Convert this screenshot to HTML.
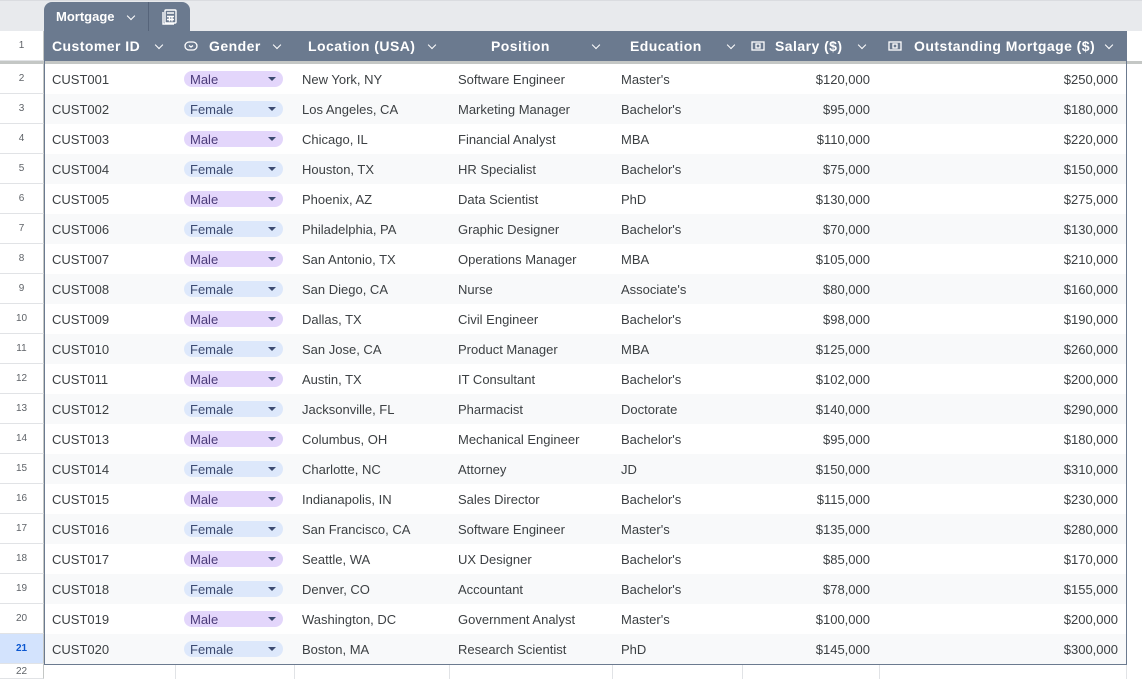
<!DOCTYPE html>
<html><head><meta charset="utf-8"><style>
*{margin:0;padding:0;box-sizing:border-box}
body{width:1142px;height:679px;overflow:hidden;background:#fff;font-family:"Liberation Sans",Arial,sans-serif;font-size:13px;color:#3c4043;position:relative}
.top{position:absolute;left:0;top:0;width:1142px;height:31px;background:#e8eaed;border-top:1px solid #dadce0}
.tab{position:absolute;left:44px;top:2px;width:146px;height:30px;background:#6b7a8f;border-radius:8px 8px 0 0;color:#fff}
.tab .t{position:absolute;left:12px;top:7px;font-weight:bold;font-size:13px}
.tab .sep{position:absolute;left:104px;top:0;width:1px;height:30px;background:#56647a}
.rn{position:absolute;left:0;width:44px;text-align:center;font-size:10px;color:#5f6368;border-bottom:1px solid #e1e3e6;border-right:1px solid #c4c7c5;background:#fff}
.hdr{position:absolute;left:44px;top:31px;width:1082px;height:30px;background:#6b7a8f;color:#fff;font-weight:bold;font-size:14px;letter-spacing:0.45px}
.hdr div{position:absolute;top:7px;white-space:nowrap}
.thick{position:absolute;left:0;top:61px;width:1142px;height:3px;background:#c4c7c5}
.row{position:absolute;left:44px;width:1082px;height:30px}
.row.alt{background:#f8f9fa}
.row div{position:absolute;top:8px;white-space:nowrap}
.chip{top:7px!important;left:140px;width:99px;height:16px;border-radius:8px;padding-left:6px;line-height:17px;font-size:13px}
.m{background:#e3d6fb;color:#4a3a78}.f{background:#dde8fb;color:#3c4a70}
.chip:after{content:"";position:absolute;right:7px;top:6px;border-left:4px solid transparent;border-right:4px solid transparent;border-top:4px solid #3c4a70}
.r{text-align:right}
.frame{position:absolute;left:44px;top:31px;width:1083px;height:634px;border:1px solid #6b7a8f;border-top:none;pointer-events:none}
.g22{position:absolute;top:665px;height:14px;width:1px;background:#e1e3e6}
.chev{position:absolute;top:11px;width:6px;height:6px;border-right:1.5px solid #fff;border-bottom:1.5px solid #fff;transform:rotate(45deg)}
</style></head><body>
<div class="top"></div>
<div class="tab"><span class="t">Mortgage</span><span class="chev" style="left:84px;top:11px"></span><div class="sep"></div>
<svg style="position:absolute;left:117px;top:7px" width="17" height="17" viewBox="0 0 17 17" fill="none" stroke="#fff" stroke-width="1.4"><path d="M2 3v12h11"/><rect x="4" y="1" width="11" height="13" rx="1"/><path d="M6 4h7M6 7.5h7M6 10.5h7M8.5 7.5v5M11 7.5v5"/></svg></div>
<div class="rn" style="top:31px;height:30px;line-height:30px">1</div>
<div class="hdr">
<div style="left:8px">Customer ID</div><span class="chev" style="left:112px"></span>
<svg style="position:absolute;left:140px;top:10px" width="14" height="10" viewBox="0 0 14 10" fill="none" stroke="#fff" stroke-width="1.3"><rect x="1" y="1" width="12" height="8" rx="4"/><path d="M5 4.5l2 1.5 2-1.5"/></svg>
<div style="left:165px">Gender</div><span class="chev" style="left:230px"></span>
<div style="left:264px">Location (USA)</div><span class="chev" style="left:385px"></span>
<div style="left:447px">Position</div><span class="chev" style="left:549px"></span>
<div style="left:586px">Education</div><span class="chev" style="left:684px"></span>
<svg style="position:absolute;left:707px;top:10px" width="14" height="10" viewBox="0 0 14 10" fill="none" stroke="#fff" stroke-width="1.3"><rect x="1" y="1" width="12" height="8"/><rect x="5" y="3" width="4" height="4"/></svg>
<div style="left:731px">Salary ($)</div><span class="chev" style="left:815px"></span>
<svg style="position:absolute;left:844px;top:10px" width="14" height="10" viewBox="0 0 14 10" fill="none" stroke="#fff" stroke-width="1.3"><rect x="1" y="1" width="12" height="8"/><rect x="5" y="3" width="4" height="4"/></svg>
<div style="left:870px">Outstanding Mortgage ($)</div><span class="chev" style="left:1062px"></span>
</div>
<div class="thick"></div>

<div class="rn" style="top:64px;height:30px;line-height:30px">2</div>
<div class="row" style="top:64px"><div style="left:8px">CUST001</div><div class="chip m">Male</div><div style="left:258px">New York, NY</div><div style="left:414px">Software Engineer</div><div style="left:577px">Master's</div><div class="r" style="right:256px">$120,000</div><div class="r" style="right:8px">$250,000</div></div>
<div class="rn" style="top:94px;height:30px;line-height:30px">3</div>
<div class="row alt" style="top:94px"><div style="left:8px">CUST002</div><div class="chip f">Female</div><div style="left:258px">Los Angeles, CA</div><div style="left:414px">Marketing Manager</div><div style="left:577px">Bachelor's</div><div class="r" style="right:256px">$95,000</div><div class="r" style="right:8px">$180,000</div></div>
<div class="rn" style="top:124px;height:30px;line-height:30px">4</div>
<div class="row" style="top:124px"><div style="left:8px">CUST003</div><div class="chip m">Male</div><div style="left:258px">Chicago, IL</div><div style="left:414px">Financial Analyst</div><div style="left:577px">MBA</div><div class="r" style="right:256px">$110,000</div><div class="r" style="right:8px">$220,000</div></div>
<div class="rn" style="top:154px;height:30px;line-height:30px">5</div>
<div class="row alt" style="top:154px"><div style="left:8px">CUST004</div><div class="chip f">Female</div><div style="left:258px">Houston, TX</div><div style="left:414px">HR Specialist</div><div style="left:577px">Bachelor's</div><div class="r" style="right:256px">$75,000</div><div class="r" style="right:8px">$150,000</div></div>
<div class="rn" style="top:184px;height:30px;line-height:30px">6</div>
<div class="row" style="top:184px"><div style="left:8px">CUST005</div><div class="chip m">Male</div><div style="left:258px">Phoenix, AZ</div><div style="left:414px">Data Scientist</div><div style="left:577px">PhD</div><div class="r" style="right:256px">$130,000</div><div class="r" style="right:8px">$275,000</div></div>
<div class="rn" style="top:214px;height:30px;line-height:30px">7</div>
<div class="row alt" style="top:214px"><div style="left:8px">CUST006</div><div class="chip f">Female</div><div style="left:258px">Philadelphia, PA</div><div style="left:414px">Graphic Designer</div><div style="left:577px">Bachelor's</div><div class="r" style="right:256px">$70,000</div><div class="r" style="right:8px">$130,000</div></div>
<div class="rn" style="top:244px;height:30px;line-height:30px">8</div>
<div class="row" style="top:244px"><div style="left:8px">CUST007</div><div class="chip m">Male</div><div style="left:258px">San Antonio, TX</div><div style="left:414px">Operations Manager</div><div style="left:577px">MBA</div><div class="r" style="right:256px">$105,000</div><div class="r" style="right:8px">$210,000</div></div>
<div class="rn" style="top:274px;height:30px;line-height:30px">9</div>
<div class="row alt" style="top:274px"><div style="left:8px">CUST008</div><div class="chip f">Female</div><div style="left:258px">San Diego, CA</div><div style="left:414px">Nurse</div><div style="left:577px">Associate's</div><div class="r" style="right:256px">$80,000</div><div class="r" style="right:8px">$160,000</div></div>
<div class="rn" style="top:304px;height:30px;line-height:30px">10</div>
<div class="row" style="top:304px"><div style="left:8px">CUST009</div><div class="chip m">Male</div><div style="left:258px">Dallas, TX</div><div style="left:414px">Civil Engineer</div><div style="left:577px">Bachelor's</div><div class="r" style="right:256px">$98,000</div><div class="r" style="right:8px">$190,000</div></div>
<div class="rn" style="top:334px;height:30px;line-height:30px">11</div>
<div class="row alt" style="top:334px"><div style="left:8px">CUST010</div><div class="chip f">Female</div><div style="left:258px">San Jose, CA</div><div style="left:414px">Product Manager</div><div style="left:577px">MBA</div><div class="r" style="right:256px">$125,000</div><div class="r" style="right:8px">$260,000</div></div>
<div class="rn" style="top:364px;height:30px;line-height:30px">12</div>
<div class="row" style="top:364px"><div style="left:8px">CUST011</div><div class="chip m">Male</div><div style="left:258px">Austin, TX</div><div style="left:414px">IT Consultant</div><div style="left:577px">Bachelor's</div><div class="r" style="right:256px">$102,000</div><div class="r" style="right:8px">$200,000</div></div>
<div class="rn" style="top:394px;height:30px;line-height:30px">13</div>
<div class="row alt" style="top:394px"><div style="left:8px">CUST012</div><div class="chip f">Female</div><div style="left:258px">Jacksonville, FL</div><div style="left:414px">Pharmacist</div><div style="left:577px">Doctorate</div><div class="r" style="right:256px">$140,000</div><div class="r" style="right:8px">$290,000</div></div>
<div class="rn" style="top:424px;height:30px;line-height:30px">14</div>
<div class="row" style="top:424px"><div style="left:8px">CUST013</div><div class="chip m">Male</div><div style="left:258px">Columbus, OH</div><div style="left:414px">Mechanical Engineer</div><div style="left:577px">Bachelor's</div><div class="r" style="right:256px">$95,000</div><div class="r" style="right:8px">$180,000</div></div>
<div class="rn" style="top:454px;height:30px;line-height:30px">15</div>
<div class="row alt" style="top:454px"><div style="left:8px">CUST014</div><div class="chip f">Female</div><div style="left:258px">Charlotte, NC</div><div style="left:414px">Attorney</div><div style="left:577px">JD</div><div class="r" style="right:256px">$150,000</div><div class="r" style="right:8px">$310,000</div></div>
<div class="rn" style="top:484px;height:30px;line-height:30px">16</div>
<div class="row" style="top:484px"><div style="left:8px">CUST015</div><div class="chip m">Male</div><div style="left:258px">Indianapolis, IN</div><div style="left:414px">Sales Director</div><div style="left:577px">Bachelor's</div><div class="r" style="right:256px">$115,000</div><div class="r" style="right:8px">$230,000</div></div>
<div class="rn" style="top:514px;height:30px;line-height:30px">17</div>
<div class="row alt" style="top:514px"><div style="left:8px">CUST016</div><div class="chip f">Female</div><div style="left:258px">San Francisco, CA</div><div style="left:414px">Software Engineer</div><div style="left:577px">Master's</div><div class="r" style="right:256px">$135,000</div><div class="r" style="right:8px">$280,000</div></div>
<div class="rn" style="top:544px;height:30px;line-height:30px">18</div>
<div class="row" style="top:544px"><div style="left:8px">CUST017</div><div class="chip m">Male</div><div style="left:258px">Seattle, WA</div><div style="left:414px">UX Designer</div><div style="left:577px">Bachelor's</div><div class="r" style="right:256px">$85,000</div><div class="r" style="right:8px">$170,000</div></div>
<div class="rn" style="top:574px;height:30px;line-height:30px">19</div>
<div class="row alt" style="top:574px"><div style="left:8px">CUST018</div><div class="chip f">Female</div><div style="left:258px">Denver, CO</div><div style="left:414px">Accountant</div><div style="left:577px">Bachelor's</div><div class="r" style="right:256px">$78,000</div><div class="r" style="right:8px">$155,000</div></div>
<div class="rn" style="top:604px;height:30px;line-height:30px">20</div>
<div class="row" style="top:604px"><div style="left:8px">CUST019</div><div class="chip m">Male</div><div style="left:258px">Washington, DC</div><div style="left:414px">Government Analyst</div><div style="left:577px">Master's</div><div class="r" style="right:256px">$100,000</div><div class="r" style="right:8px">$200,000</div></div>
<div class="rn" style="top:634px;height:30px;line-height:30px;background:#d3e3fd;color:#0b57d0;font-weight:bold">21</div>
<div class="row alt" style="top:634px"><div style="left:8px">CUST020</div><div class="chip f">Female</div><div style="left:258px">Boston, MA</div><div style="left:414px">Research Scientist</div><div style="left:577px">PhD</div><div class="r" style="right:256px">$145,000</div><div class="r" style="right:8px">$300,000</div></div>
<div class="rn" style="top:664px;height:15px;line-height:15px">22</div>
<div class="g22" style="left:175px"></div><div class="g22" style="left:294px"></div><div class="g22" style="left:449px"></div><div class="g22" style="left:612px"></div><div class="g22" style="left:742px"></div><div class="g22" style="left:879px"></div><div class="g22" style="left:1126px"></div>
<div class="frame"></div>
</body></html>
